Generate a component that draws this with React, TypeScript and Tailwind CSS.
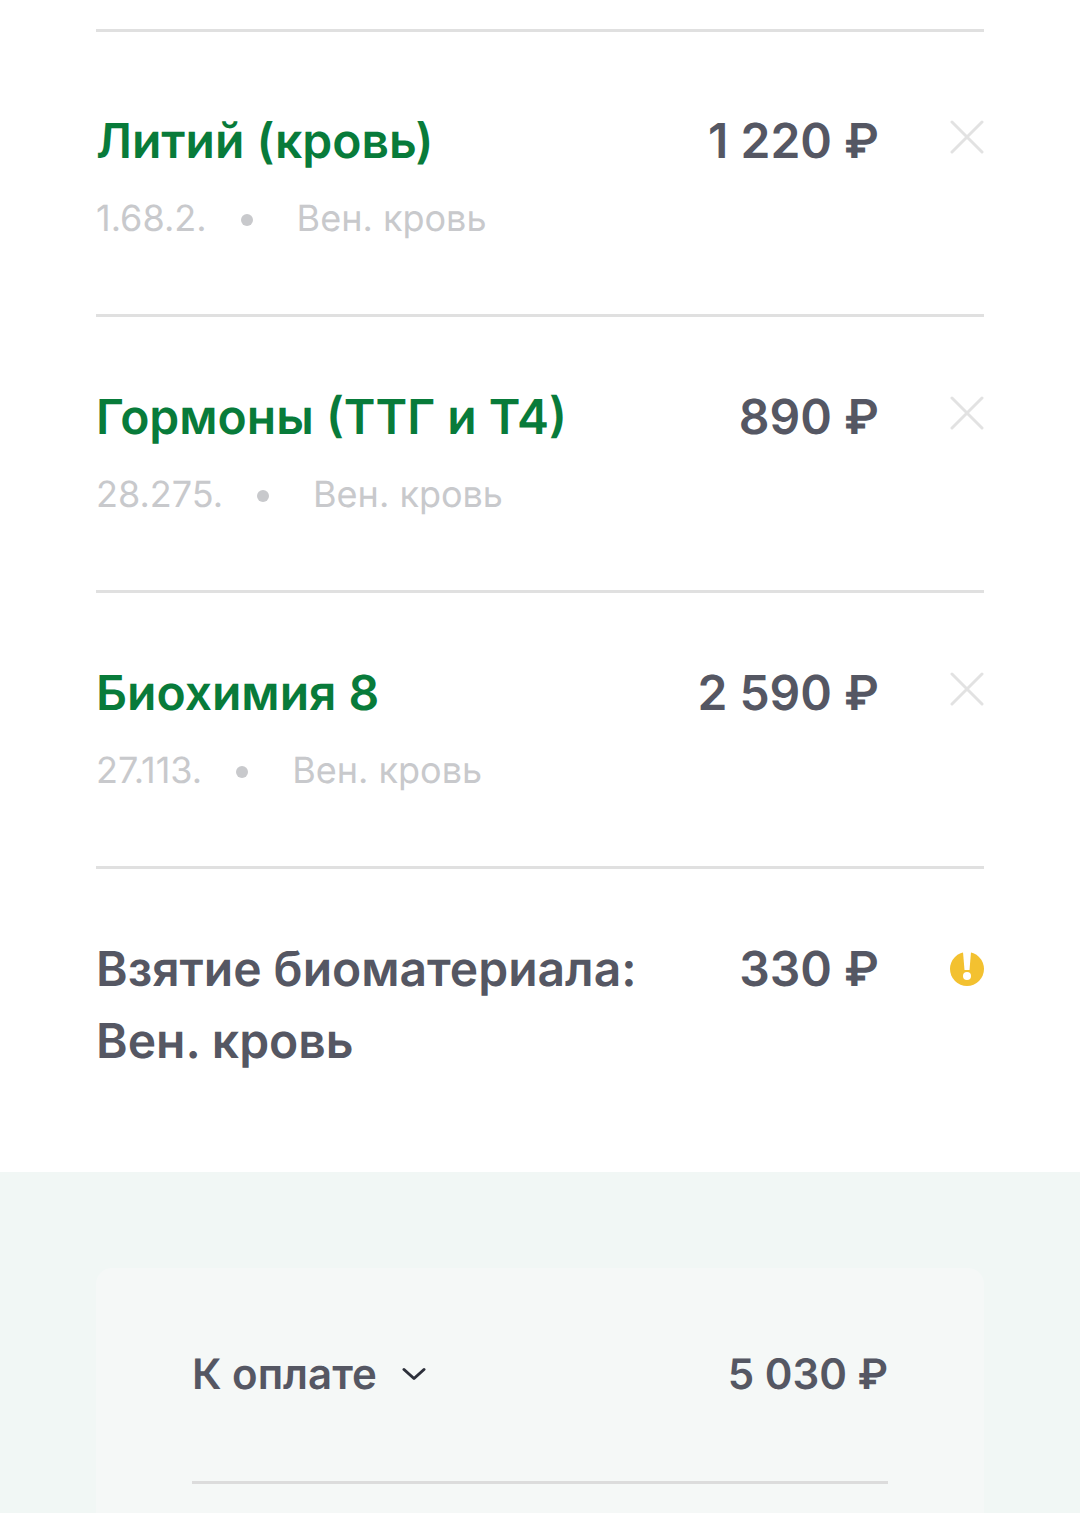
const ITEMS = [
  { name: "Литий (кровь)", price: "1 220 ₽", code: "1.68.2." },
  { name: "Гормоны (ТТГ и Т4)", price: "890 ₽", code: "28.275." },
  { name: "Биохимия 8", price: "2 590 ₽", code: "27.113." },
];

function CloseIcon() {
  return (
    <svg width="34" height="34" viewBox="0 0 34 34" fill="none" className="shrink-0">
      <path d="M2 2L32 32M32 2L2 32" stroke="#e2e2e2" strokeWidth="3" strokeLinecap="round" />
    </svg>
  );
}

function WarnIcon() {
  return (
    <svg width="34" height="34" viewBox="0 0 34 34" className="shrink-0">
      <circle cx="17" cy="17" r="17" fill="#f3c130" />
      <path d="M13 0H21L19.500 18H14.500Z" fill="#fff" />
      <circle cx="17" cy="24" r="4" fill="#fff" />
    </svg>
  );
}

function Row({ name, price, code, first }: { name: string; price: string; code: string; first: boolean }) {
  return (
    <div className={first ? "h-[285px] border-t-[3px] border-[#e0e0e0] pt-[79px]" : "h-[276px] border-t-[3px] border-[#e0e0e0] pt-[70px]"}>
      <div className="flex items-start">
        <div className="flex-1 text-[48px] leading-[60px] font-semibold text-[#087b3a]">{name}</div>
        <div className="text-[48px] leading-[60px] font-semibold text-[#555763]">{price}</div>
        <div className="ml-[71px] pt-[9px]">
          <CloseIcon />
        </div>
      </div>
      <div className="mt-[25px] flex items-center text-[36px] leading-[44px] text-[#c8c9cc]">
        <span>{code}</span>
        <span className="mt-[4px] mr-[44px] ml-[34px] size-[12px] rounded-full bg-[#c8c9cc]" />
        <span>Вен. кровь</span>
      </div>
    </div>
  );
}

export default function App() {
  return (
    <div className="h-[1513px] w-[1080px] overflow-hidden bg-white font-['Inter',sans-serif] [text-rendering:geometricPrecision]">
      <div className="px-[96px] pt-[29px]">
        {ITEMS.map((item, i) => (
          <Row key={item.code} first={i === 0} {...item} />
        ))}
        <div className="h-[306px] border-t-[3px] border-[#e0e0e0] pt-[64px]">
          <div className="flex items-start">
            <div className="flex-1 text-[48px] leading-[72px] font-semibold text-[#555763]">
              Взятие биоматериала:
              <br />
              Вен. кровь
            </div>
            <div className="text-[48px] leading-[72px] font-semibold text-[#555763]">330 ₽</div>
            <div className="ml-[71px] pt-[19px]">
              <WarnIcon />
            </div>
          </div>
        </div>
      </div>
      <div className="h-[341px] bg-[#f1f7f5] px-[96px] pt-[96px]">
        <div className="h-[245px] rounded-t-[16px] bg-[#f5f8f7] px-[96px]">
          <div className="flex h-[216px] items-center justify-between border-b-[3px] border-[#dcdcdc]">
            <div className="flex items-center">
              <span className="text-[42px] leading-[52px] font-semibold text-[#555763]">К оплате</span>
              <svg width="24" height="14" viewBox="0 0 24 14" fill="none" className="mb-[2px] ml-[25px]">
                <path d="M2 2.500L12 11.500L22 2.500" stroke="#2d303b" strokeWidth="3" strokeLinecap="round" strokeLinejoin="round" />
              </svg>
            </div>
            <span className="text-[42px] leading-[52px] font-semibold text-[#555763]">5 030 ₽</span>
          </div>
        </div>
      </div>
    </div>
  );
}
